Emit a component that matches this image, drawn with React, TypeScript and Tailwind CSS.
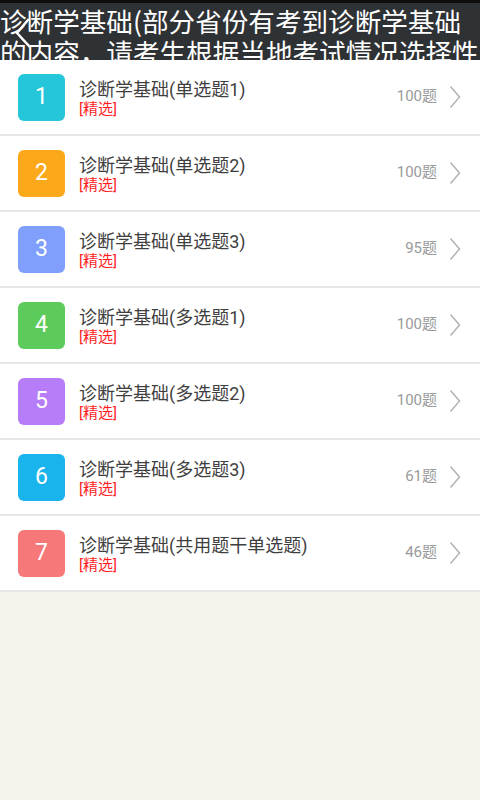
import React from "react";

const items = [
  { n: 1, title: "诊断学基础(单选题1)", count: "100题", color: "bg-[#26c6da]" },
  { n: 2, title: "诊断学基础(单选题2)", count: "100题", color: "bg-[#fba91a]" },
  { n: 3, title: "诊断学基础(单选题3)", count: "95题", color: "bg-[#809ffc]" },
  { n: 4, title: "诊断学基础(多选题1)", count: "100题", color: "bg-[#5ccb5c]" },
  { n: 5, title: "诊断学基础(多选题2)", count: "100题", color: "bg-[#b77cf8]" },
  { n: 6, title: "诊断学基础(多选题3)", count: "61题", color: "bg-[#19b4ec]" },
  { n: 7, title: "诊断学基础(共用题干单选题)", count: "46题", color: "bg-[#f77878]" },
];

const font = "font-['Roboto','Noto_Sans_CJK_SC',sans-serif]";

export default function App() {
  return (
    <div className={`w-[480px] h-[800px] bg-[#f6f3ec] flex flex-col ${font}`}>
      <div className="relative h-[60px] shrink-0 bg-[#2f3235] border-t-[3px] border-[#0d0d0d] overflow-hidden">
        <div className="pt-[2px] text-white text-[26.6px] leading-[31px] font-['Noto_Sans_CJK_SC',sans-serif] whitespace-normal break-all">
          诊断学基础(部分省份有考到诊断学基础的内容，请考生根据当地考试情况选择性复习)
        </div>
        <svg className="absolute left-[12px] top-[14px]" width="24" height="32" viewBox="0 0 24 32">
          <polyline points="16,3 5,16 17,29" fill="none" stroke="#ffffff" strokeWidth="2.4" strokeLinecap="square" />
        </svg>
      </div>
      <div className="bg-white flex flex-col">
        {items.map((it) => (
          <div key={it.n} className="h-[76px] border-b-2 border-[#e6e6e6] flex items-center">
            <div className={`ml-[18px] w-[47px] h-[47px] rounded-[6px] ${it.color} flex items-center justify-center text-white text-[23px] font-['Roboto',sans-serif]`}>
              {it.n}
            </div>
            <div className="ml-[14px] pt-[3px] flex flex-col flex-1">
              <div className="text-[18px] leading-[22px] text-[#3f3f3f]">{it.title}</div>
              <div className="text-[15px] leading-[18px] text-[#ff1f1f] mt-[-1px]">[精选]</div>
            </div>
            <div className="text-[15px] text-[#9a9a9a] mt-[-1px]">{it.count}</div>
            <svg className="ml-[12px] mr-[19px]" width="12" height="24" viewBox="0 0 12 24">
              <polyline points="1.5,1.5 10.5,12 1.5,22.5" fill="none" stroke="#b5b5b5" strokeWidth="1.6" />
            </svg>
          </div>
        ))}
      </div>
    </div>
  );
}
